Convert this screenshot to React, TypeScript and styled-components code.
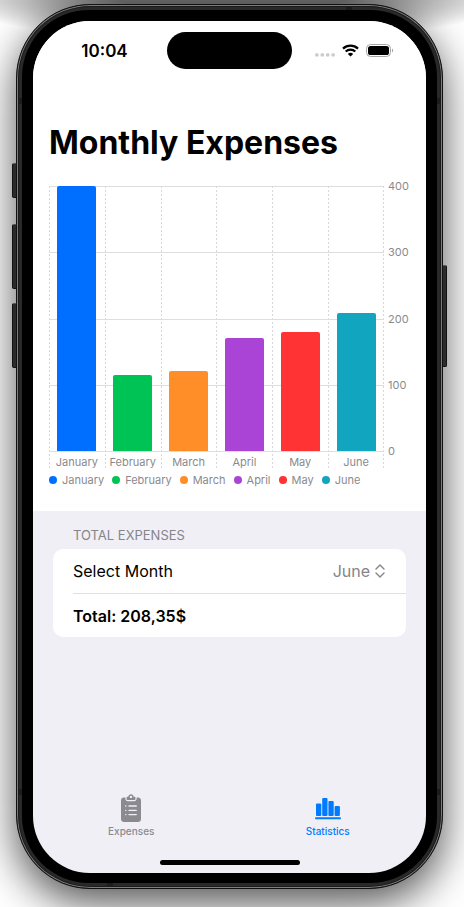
import { useState } from "react";
import styled, { createGlobalStyle } from "styled-components";

const GlobalStyle = createGlobalStyle`
  *, *::before, *::after { box-sizing: border-box; }
  html, body { margin: 0; padding: 0; background: #ffffff; }
  body { font-family: Inter, "Liberation Sans", sans-serif; color: #000000; }
`;

const gray = "#8a8a8e";
const line = "#dededf";

const months = [
  { name: "January", amount: 400, color: "#006eff" },
  { name: "February", amount: 115, color: "#00c355" },
  { name: "March", amount: 121, color: "#ff8d28" },
  { name: "April", amount: 170, color: "#aa44d6" },
  { name: "May", amount: 180, color: "#ff3333" },
  { name: "June", amount: 208.35, color: "#12a5bf" },
];
const ticks = [400, 300, 200, 100, 0];
const formatTotal = (n: number) => n.toFixed(2).replace(".", ",") + "$";

const Page = styled.div`
  display: flex;
  min-height: 100vh;
  padding: 4px 21px 18px 16px;
  overflow: hidden;
  background: radial-gradient(ellipse 62% 46px at 50% -4px, #707070 40%, transparent) no-repeat;
`;

const Phone = styled.div`
  position: relative;
  flex: 1;
  display: flex;
  padding: 5px;
  border: 1px solid #111111;
  border-radius: 74px;
  background: #292929;
  box-shadow:
    inset 0 0 0 1px #7c7c7c,
    inset 0 0 0 2px #1b1b1b,
    0 14px 42px rgba(0, 0, 0, 0.68);
`;

const SideButton = styled.span<{ $side: "left" | "right"; $top: number; $height: number }>`
  position: absolute;
  ${(p) => p.$side}: -5px;
  top: ${(p) => p.$top}px;
  width: 5px;
  height: ${(p) => p.$height}px;
  border: 1px solid #111111;
  border-top-color: #555555;
  border-radius: ${(p) => (p.$side === "left" ? "2px 0 0 2px" : "0 2px 2px 0")};
  background: #2b2b2b;
`;

const Band = styled.span<{ $edge: "top" | "bottom" | "left" | "right"; $offset: string }>`
  position: absolute;
  ${(p) => p.$edge}: 1px;
  ${(p) => (p.$edge === "top" || p.$edge === "bottom" ? "left" : "top")}: ${(p) => p.$offset};
  width: ${(p) => (p.$edge === "top" || p.$edge === "bottom" ? 6 : 5)}px;
  height: ${(p) => (p.$edge === "top" || p.$edge === "bottom" ? 5 : 6)}px;
  background: #1c1c1c;
`;

const Bezel = styled.div`
  position: relative;
  flex: 1;
  display: flex;
  padding: 11px 11px 10px;
  border-radius: 67px;
  background: #000000;
`;

const Screen = styled.div`
  flex: 1;
  min-width: 0;
  display: flex;
  flex-direction: column;
  overflow: hidden;
  border-radius: 57px;
  background: #f0eff6;
`;

const ChartPanel = styled.section`
  padding-bottom: 24px;
  background: #ffffff;
`;

const StatusBar = styled.header`
  display: grid;
  grid-template-columns: 1fr 125px 1fr;
  align-items: center;
  padding-top: 11px;
`;

const Clock = styled.time`
  padding-left: 9px;
  text-align: center;
  font-size: 17px;
  line-height: 20px;
  font-weight: 600;
`;

const Island = styled.div`
  height: 37px;
  border-radius: 19px;
  background: #000000;
`;

const StatusIcons = styled.div`
  display: flex;
  align-items: center;
  justify-content: flex-end;
  gap: 7px;
  padding-right: 32px;
`;

const Title = styled.h1`
  margin: 52px 16px 21px;
  font-size: 32px;
  line-height: 44px;
  font-weight: 700;
`;

const Chart = styled.figure`
  margin: 0 16px;
  color: ${gray};
  font-size: 11px;
  line-height: 14px;
`;

const ChartBody = styled.div`
  display: grid;
  grid-template-columns: 1fr 26px;
`;

const dashes = `repeating-linear-gradient(#d8d8da 0 2px, transparent 2px 4px)`;

const Columns = styled.div`
  display: grid;
  grid-template-columns: repeat(6, 1fr);
  background: ${dashes} 100% 0 / 1px 100% no-repeat;
`;

const Column = styled.div`
  min-width: 0;
  text-align: center;
  background: ${dashes} 0 0 / 1px 100% no-repeat;
`;

const rule = `linear-gradient(${line}, ${line})`;

const BarArea = styled.div`
  display: flex;
  align-items: flex-end;
  justify-content: center;
  height: 266px;
  padding-bottom: 1px;
  background-image: ${rule}, ${rule}, ${rule}, ${rule}, ${rule};
  background-size: 100% 1px;
  background-position: 0 0, 0 25%, 0 50%, 0 75%, 0 100%;
  background-repeat: no-repeat;
`;

const Bar = styled.div<{ $value: number; $color: string }>`
  width: 70%;
  height: ${(p) => p.$value / 4}%;
  border-radius: 2px 2px 0 0;
  background: ${(p) => p.$color};
`;

const MonthLabel = styled.div`
  padding: 3px 0 1px;
`;

const ValueAxis = styled.div`
  display: flex;
  flex-direction: column;
  justify-content: space-between;
  height: 279px;
  margin-top: -7px;
  padding-left: 4px;
`;

const Legend = styled.ul`
  display: flex;
  gap: 8px;
  margin: 3px 0 0;
  padding: 0;
  list-style: none;
`;

const LegendItem = styled.li<{ $color: string }>`
  display: flex;
  align-items: center;
  gap: 5px;
  &::before {
    content: "";
    width: 8px;
    height: 8px;
    border-radius: 50%;
    background: ${(p) => p.$color};
  }
`;

const Totals = styled.section`
  flex: 1;
  padding: 15px 20px 0;
`;

const SectionTitle = styled.h2`
  margin: 0 20px 5px;
  color: #85858a;
  font-size: 13px;
  line-height: 18px;
  font-weight: 400;
`;

const Card = styled.div`
  padding-left: 20px;
  border-radius: 10px;
  background: #ffffff;
`;

const Row = styled.div<{ $strong?: boolean }>`
  display: flex;
  align-items: center;
  justify-content: space-between;
  height: 44px;
  padding-right: 21px;
  font-size: 16px;
  font-weight: ${(p) => (p.$strong ? 600 : 400)};
  & + & { border-top: 1px solid #e0e0e2; }
`;

const Picker = styled.span`
  display: flex;
  align-items: center;
  gap: 5px;
  color: #85858a;
`;

const Select = styled.select`
  appearance: none;
  field-sizing: content;
  margin: 0;
  padding: 0;
  border: 0;
  background: none;
  color: inherit;
  font: inherit;
  text-align: right;
`;

const TabBar = styled.nav`
  display: grid;
  grid-template-columns: 1fr 1fr;
`;

const Tab = styled.button<{ $active?: boolean }>`
  display: flex;
  flex-direction: column;
  align-items: center;
  gap: 2px;
  padding: 0;
  border: 0;
  background: none;
  color: ${(p) => (p.$active ? "#007aff" : "#8a8a8f")};
  font: 500 10px/14px Inter, "Liberation Sans", sans-serif;
`;

const HomeIndicator = styled.div`
  align-self: center;
  width: 140px;
  height: 5px;
  margin: 22px 0 8px;
  border-radius: 3px;
  background: #000000;
`;

const SignalSlot = styled.span`
  display: flex;
  padding-top: 8px;
`;

const Signal = () => (
  <svg width="20" height="4" viewBox="0 0 20 4" fill="#cbcbcd">
    {[0.2, 5.6, 11, 16.4].map((x) => (
      <rect key={x} x={x} y="0.2" width="3.4" height="3.4" rx="1.2" />
    ))}
  </svg>
);

const Wifi = () => (
  <svg width="17" height="13" viewBox="0 0 17 13" fill="none" stroke="#000" strokeWidth="2.2">
    <path d="M1 4.600C5.200.6 11.800.6 16 4.600" />
    <path d="M3.700 7.500C6.400 5 10.600 5 13.300 7.500" />
    <path d="M5.800 9.900C7.300 8.400 9.700 8.400 11.200 9.900L8.500 12.600Z" fill="#000" stroke="none" />
  </svg>
);

const Battery = () => (
  <svg width="28" height="14" viewBox="0 0 28 14">
    <rect x="0.5" y="0.5" width="24" height="12" rx="4" fill="none" stroke="#a6a6a6" />
    <rect x="2" y="2" width="21" height="9" rx="2.6" fill="#000" />
    <path d="M26 4.600v4c1.500-.6 1.500-3.400 0-4z" fill="#a6a6a6" />
  </svg>
);

const Chevrons = () => (
  <svg width="10" height="14" viewBox="0 0 10 14" fill="none" stroke="currentColor" strokeWidth="1.4" strokeLinecap="round" strokeLinejoin="round">
    <path d="M1 5l4-4 4 4M1 9l4 4 4-4" />
  </svg>
);

const Clipboard = () => (
  <svg width="20" height="28" viewBox="0 0 20 28">
    <path
      fill="currentColor"
      d="M3 3.500h1.400v1.200c0 1.500 1 2.500 2.500 2.500h6.200c1.500 0 2.500-1 2.500-2.500V3.500H17c1.700 0 3 1.300 3 3V25c0 1.700-1.300 3-3 3H3c-1.700 0-3-1.300-3-3V6.500c0-1.700 1.300-3 3-3z"
    />
    <path
      fill="currentColor"
      fillRule="evenodd"
      d="M6.800 2.700h.5C7.500 1.200 8.600.2 10 .2s2.500 1 2.700 2.500h.5c.8 0 1.300.5 1.300 1.300v.7c0 .8-.5 1.300-1.300 1.300H6.800c-.8 0-1.300-.5-1.300-1.300V4c0-.8.5-1.300 1.300-1.300zM10 1.700a1.200 1.200 0 1 0 0 2.400 1.200 1.200 0 0 0 0-2.400z"
    />
    <g stroke="#f0eff6" strokeWidth="1.3" strokeLinecap="round">
      <path d="M4.700 12h.2M8 12h7.300M4.700 16.300h.2M8 16.300h7.300M4.700 20.600h.2M8 20.600h7.300" />
    </g>
  </svg>
);

const StatsIcon = () => (
  <svg width="26" height="28" viewBox="0 0 26 28" fill="currentColor">
    <rect x="1" y="9.5" width="5.3" height="12.5" rx="1" />
    <rect x="7.2" y="4" width="5.3" height="18" rx="1" />
    <rect x="13.4" y="7" width="5.3" height="15" rx="1" />
    <rect x="19.6" y="12" width="5.3" height="10" rx="1" />
    <rect x="0" y="23.2" width="26" height="2" rx="1" />
  </svg>
);

export default function App() {
  const [month, setMonth] = useState("June");
  const total = months.find((m) => m.name === month)!.amount;

  return (
    <>
      <GlobalStyle />
      <Page>
        <Phone>
          <SideButton $side="left" $top={158} $height={35} />
          <SideButton $side="left" $top={219} $height={65} />
          <SideButton $side="left" $top={298} $height={65} />
          <SideButton $side="right" $top={260} $height={102} />
          <Band $edge="top" $offset="calc(100% - 96px)" />
          <Band $edge="bottom" $offset="90px" />
          <Band $edge="left" $offset="93px" />
          <Band $edge="right" $offset="93px" />
          <Band $edge="left" $offset="calc(100% - 99px)" />
          <Band $edge="right" $offset="calc(100% - 99px)" />
          <Bezel>
            <Screen>
              <ChartPanel>
                <StatusBar>
                  <Clock>10:04</Clock>
                  <Island />
                  <StatusIcons>
                    <SignalSlot><Signal /></SignalSlot>
                    <Wifi />
                    <Battery />
                  </StatusIcons>
                </StatusBar>
                <Title>Monthly Expenses</Title>
                <Chart>
                  <ChartBody>
                    <Columns>
                      {months.map((m) => (
                        <Column key={m.name}>
                          <BarArea>
                            <Bar $value={m.amount} $color={m.color} />
                          </BarArea>
                          <MonthLabel>{m.name}</MonthLabel>
                        </Column>
                      ))}
                    </Columns>
                    <ValueAxis>
                      {ticks.map((t) => (
                        <span key={t}>{t}</span>
                      ))}
                    </ValueAxis>
                  </ChartBody>
                  <Legend>
                    {months.map((m) => (
                      <LegendItem key={m.name} $color={m.color}>{m.name}</LegendItem>
                    ))}
                  </Legend>
                </Chart>
              </ChartPanel>
              <Totals>
                <SectionTitle>TOTAL EXPENSES</SectionTitle>
                <Card>
                  <Row>
                    <label htmlFor="month">Select Month</label>
                    <Picker>
                      <Select id="month" value={month} onChange={(e) => setMonth(e.target.value)}>
                        {months.map((m) => (
                          <option key={m.name}>{m.name}</option>
                        ))}
                      </Select>
                      <Chevrons />
                    </Picker>
                  </Row>
                  <Row $strong>Total: {formatTotal(total)}</Row>
                </Card>
              </Totals>
              <TabBar>
                <Tab type="button"><Clipboard />Expenses</Tab>
                <Tab type="button" $active aria-current="page"><StatsIcon />Statistics</Tab>
              </TabBar>
              <HomeIndicator />
            </Screen>
          </Bezel>
        </Phone>
      </Page>
    </>
  );
}
